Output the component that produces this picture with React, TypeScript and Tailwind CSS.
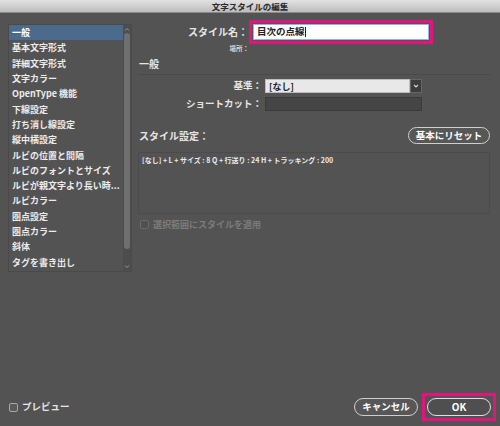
import React from "react";

const items = [
  "一般",
  "基本文字形式",
  "詳細文字形式",
  "文字カラー",
  "OpenType 機能",
  "下線設定",
  "打ち消し線設定",
  "縦中横設定",
  "ルビの位置と間隔",
  "ルビのフォントとサイズ",
  "ルビが親文字より長い時...",
  "ルビカラー",
  "圏点設定",
  "圏点カラー",
  "斜体",
  "タグを書き出し",
];

function Checkbox({ dim }: { dim?: boolean }) {
  return (
    <span
      className={
        dim
          ? "w-[9px] h-[9px] rounded-[2px] border border-[#6a6a6a] bg-[#505050]"
          : "w-[9px] h-[9px] rounded-[2px] border border-[#a8a8a8] bg-[#5a5a5a]"
      }
    />
  );
}

export default function App() {
  return (
    <div className="w-[500px] h-[426px] bg-[#535353] flex flex-col overflow-hidden text-[#e6e6e6] font-['Noto_Sans_CJK_JP','Liberation_Sans',sans-serif]">
      {/* title bar */}
      <div className="h-[13px] shrink-0 bg-gradient-to-b from-[#e2e2e2] to-[#bdbdbd] border-b border-[#8a8a8a] flex items-center justify-center">
        <span className="text-[8.5px] leading-none text-[#2a2a2a] font-bold">文字スタイルの編集</span>
      </div>

      <div className="flex mt-[7px] pl-[8px]">
        {/* category list */}
        <div className="mt-[4px] w-[124px] h-[248px] border border-[#4a4a4a] flex">
          <div className="flex-1 flex flex-col">
            {items.map((t, i) => (
              <div
                key={t}
                className={
                  i === 0
                    ? "h-[15.3px] flex items-center pl-[3px] bg-[#4b6a8c] text-white text-[9px] font-bold leading-none"
                    : "h-[15.3px] flex items-center pl-[3px] text-[9px] font-bold leading-none text-[#ececec] whitespace-nowrap"
                }
              >
                {t}
              </div>
            ))}
          </div>
          <div className="w-[8px] bg-[#4d4d4d] flex flex-col items-center">
            <svg width="6" height="5" viewBox="0 0 6 5" className="mt-[2px]">
              <path d="M1 3.5 L3 1.5 L5 3.5" stroke="#9a9a9a" strokeWidth="1" fill="none" />
            </svg>
            <div className="w-[6px] mt-[1px] h-[216px] rounded-[3px] bg-[#6f6f6f]" />
            <svg width="6" height="5" viewBox="0 0 6 5" className="mt-auto mb-[2px]">
              <path d="M1 1.5 L3 3.5 L5 1.5" stroke="#9a9a9a" strokeWidth="1" fill="none" />
            </svg>
          </div>
        </div>

        {/* right panel */}
        <div className="ml-[6px] w-[352px] flex flex-col">
          <div className="flex items-center h-[24px]">
            <span className="w-[111px] text-right text-[10px] font-bold leading-none pr-[1px]">スタイル名：</span>
            <div className="w-[184px] h-[24px] border-[3px] border-[#e2157f] p-[1px]">
              <div className="h-full bg-white border border-[#8fb3e3] flex items-center pl-[3px]">
                <span className="text-[9.5px] leading-none text-[#222] font-bold">目次の点線</span>
                <span className="w-[1px] h-[10px] bg-[#222]" />
              </div>
            </div>
          </div>
          <div className="h-[9px] flex items-center">
            <span className="w-[111px] text-right text-[6.5px] font-bold leading-none text-[#d8d8d8]">場所：</span>
          </div>
          <div className="mt-[5px] pl-[1px] text-[10px] font-bold leading-none h-[12px] flex items-center">一般</div>
          <div className="mt-[4px] h-px bg-[#4a4a4a]" />

          <div className="mt-[4px] flex items-center h-[14px]">
            <span className="w-[125px] text-right text-[9.5px] font-bold leading-none pr-[1px]">基準：</span>
            <div className="ml-[2px] w-[145px] h-[14px] bg-[#e8e8e8] border border-[#bdbdbd] flex items-center pl-[3px]">
              <span className="text-[9px] font-bold leading-none text-[#222]">[なし]</span>
            </div>
            <div className="w-[12px] h-[14px] bg-[#3c3c3c] border border-[#666] flex items-center justify-center">
              <svg width="6" height="4" viewBox="0 0 6 4">
                <path d="M1 1 L3 3 L5 1" stroke="#d0d0d0" strokeWidth="1.2" fill="none" />
              </svg>
            </div>
          </div>
          <div className="mt-[4px] flex items-center h-[14px]">
            <span className="w-[125px] text-right text-[9.5px] font-bold leading-none pr-[1px]">ショートカット：</span>
            <div className="ml-[2px] w-[157px] h-[14px] bg-[#454545] border border-[#3a3a3a]" />
          </div>

          <div className="mt-[16px] flex items-center justify-between h-[17px]">
            <span className="pl-[1px] text-[10px] font-bold leading-none">スタイル設定：</span>
            <button className="w-[82px] h-[17px] rounded-full border border-[#cfcfcf] bg-[#575757] text-[9.5px] font-bold leading-none text-white flex items-center justify-center">
              基本にリセット
            </button>
          </div>

          <div className="mt-[8px] h-[62px] border border-[#4b4b4b] bg-[#535353] pl-[3px] pt-[3px] flex items-start">
            <span className="text-[7px] font-bold leading-[9px] whitespace-nowrap text-[#ececec]">
              [なし] + L + サイズ : 8 Q + 行送り : 24 H + トラッキング : 200
            </span>
          </div>

          <div className="mt-[5px] pl-[2px] flex items-center gap-[4px] h-[10px]">
            <Checkbox dim />
            <span className="text-[9px] font-bold leading-none text-[#7c7c7c]">選択範囲にスタイルを適用</span>
          </div>
        </div>
      </div>

      {/* bottom bar */}
      <div className="mt-auto mb-[5px] flex items-center pl-[9px] pr-[4px] h-[28px]">
        <div className="flex items-center gap-[4px]">
          <Checkbox />
          <span className="text-[9.5px] font-bold leading-none">プレビュー</span>
        </div>
        <div className="ml-auto flex items-center">
          <button className="w-[64px] h-[18px] rounded-full border border-[#cfcfcf] bg-[#575757] text-[9.5px] font-bold leading-none text-white flex items-center justify-center">
            キャンセル
          </button>
          <div className="ml-[4px] w-[74px] h-[28px] border-[3px] border-[#e2157f] flex items-center justify-center">
            <button className="w-[64px] h-[18px] rounded-full border-[1.5px] border-[#e0e0e0] bg-[#4f4f4f] text-[10px] font-bold leading-none text-white flex items-center justify-center">
              OK
            </button>
          </div>
        </div>
      </div>
    </div>
  );
}
